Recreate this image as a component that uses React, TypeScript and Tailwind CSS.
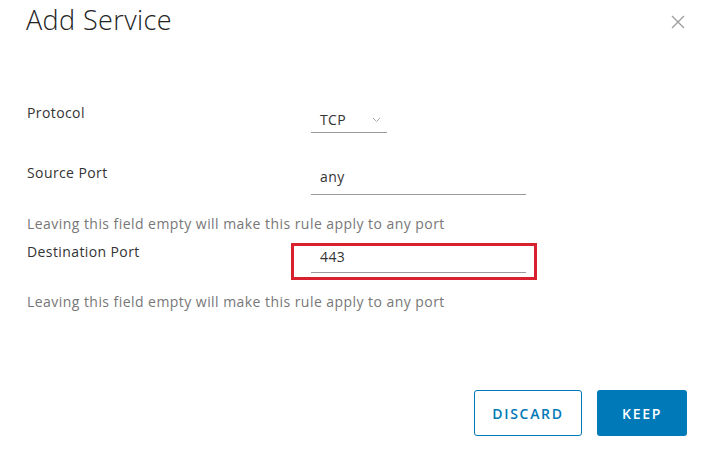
import * as React from "react";

const font = { fontFamily: '"Open Sans", "Noto Sans", sans-serif' };

function Field({ label, children }: { label: string; children: React.ReactNode }) {
  return (
    <div className="flex items-start">
      <div className="w-[284px] text-[14px] tracking-[0.4px] text-[#333] leading-[20px]">{label}</div>
      {children}
    </div>
  );
}

export default function App() {
  return (
    <div className="w-[707px] h-[449px] bg-white relative overflow-hidden" style={font}>
      <div className="flex items-start justify-between pl-[26px] pr-[22px] pt-[2px]">
        <h1 className="text-[27px] font-light tracking-[0.4px] text-[#222] leading-[36px]">Add Service</h1>
        <button className="mt-[13px] text-[#999]" aria-label="Close">
          <svg width="14" height="14" viewBox="0 0 14 14" fill="none" stroke="currentColor" strokeWidth="1.2">
            <path d="M1 1L13 13M13 1L1 13" />
          </svg>
        </button>
      </div>

      <div className="pl-[27px] mt-[65px] flex flex-col">
        <Field label="Protocol">
          <div className="mt-[4px] w-[76px] h-[26px] border-b border-[#9a9a9a] flex items-center justify-between pl-[9px] pr-[6px]">
            <span className="text-[14px] tracking-[0.4px] text-[#333]">TCP</span>
            <svg width="9" height="6" viewBox="0 0 9 6" fill="none" stroke="#aaa" strokeWidth="1">
              <path d="M1 1L4.5 4.5L8 1" />
            </svg>
          </div>
        </Field>

        <div className="mt-[30px]">
          <Field label="Source Port">
            <div className="mt-[4px] w-[215px] h-[28px] border-b border-[#9a9a9a] pl-[9px] text-[14px] tracking-[0.4px] text-[#333] leading-[20px]">
              any
            </div>
          </Field>
        </div>

        <p className="mt-[19px] text-[14px] tracking-[0.45px] leading-[20px] text-[#777]">
          Leaving this field empty will make this rule apply to any port
        </p>

        <div className="mt-[8px] flex items-start">
          <div className="w-[264px] text-[14px] tracking-[0.4px] text-[#333] leading-[20px]">Destination Port</div>
          <div className="mt-[1px] w-[246px] h-[37px] border-[3px] border-[#d8212f] pl-[17px]">
            <div className="w-[215px] h-[27px] border-b border-[#9a9a9a] pl-[9px] pt-[2px] text-[14px] tracking-[0.4px] text-[#333] leading-[18px]">
              443
            </div>
          </div>
        </div>

        <p className="mt-[12px] text-[14px] tracking-[0.45px] leading-[20px] text-[#777]">
          Leaving this field empty will make this rule apply to any port
        </p>
      </div>

      <div className="absolute left-[474px] top-[390px] flex gap-[15px]">
        <button className="w-[108px] h-[46px] rounded-[3px] border border-[#0079b8] text-[#0079b8] text-[14px] font-semibold tracking-[1.7px]">
          DISCARD
        </button>
        <button className="w-[90px] h-[46px] rounded-[3px] bg-[#0079b8] text-white text-[14px] font-semibold tracking-[1.7px]">
          KEEP
        </button>
      </div>
    </div>
  );
}
